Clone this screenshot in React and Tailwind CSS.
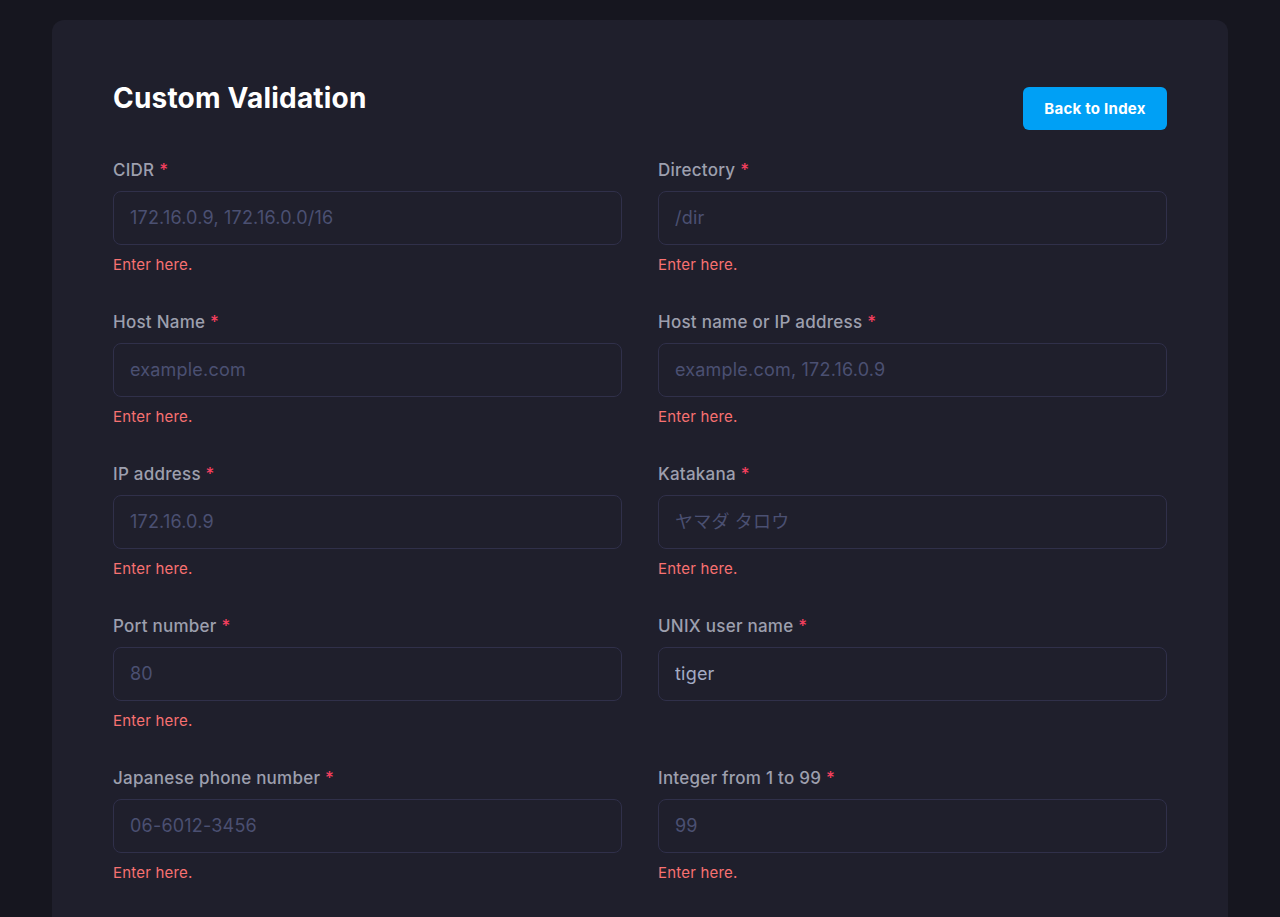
import React from 'react';

const fields = [
  { label: 'CIDR', placeholder: '172.16.0.9, 172.16.0.0/16', error: true },
  { label: 'Directory', placeholder: '/dir', error: true },
  { label: 'Host Name', placeholder: 'example.com', error: true },
  { label: 'Host name or IP address', placeholder: 'example.com, 172.16.0.9', error: true },
  { label: 'IP address', placeholder: '172.16.0.9', error: true },
  { label: 'Katakana', placeholder: 'ヤマダ タロウ', error: true },
  { label: 'Port number', placeholder: '80', error: true },
  { label: 'UNIX user name', placeholder: '', value: 'tiger', error: false },
  { label: 'Japanese phone number', placeholder: '06-6012-3456', error: true },
  { label: 'Integer from 1 to 99', placeholder: '99', error: true },
];

const Field = ({ label, placeholder, value, error }) => (
  <div className="flex flex-col">
    <label className="text-[17px] leading-[26px] font-medium tracking-[0.25px] text-[#9d9fae]">
      {label} <span className="text-[#f43f5e]">*</span>
    </label>
    <input
      className="mt-[8px] h-[54px] w-full rounded-lg border border-[#30304a] bg-[#1f1f2c] px-4 pb-[2px] text-[18px] tracking-[0.2px] text-[#a3abc4] placeholder:text-[#4b5072] outline-none"
      placeholder={placeholder}
      defaultValue={value}
    />
    {error && (
      <p className="mt-[10px] text-[15px] leading-5 tracking-[0.2px] text-[#f87171]">Enter here.</p>
    )}
  </div>
);

export default function App() {
  return (
    <div
      className="min-h-screen bg-[#16161f] px-[52px] pt-5"
      style={{ fontFamily: 'Inter, "Noto Sans CJK JP", sans-serif' }}
    >
      <div className="rounded-xl bg-[#1f1f2c] px-[61px] pt-[80px] pb-16 min-h-[897px]">
        <div className="flex items-start justify-between mb-[27px] h-[50px] -mt-[20px]">
          <h1 className="text-[28px] leading-9 font-bold tracking-[0.2px] text-white">Custom Validation</h1>
          <button className="mt-[7px] h-[43px] w-[144px] rounded-md bg-[#00a0f5] pt-px text-[15px] font-bold tracking-[0.25px] text-white">
            Back to Index
          </button>
        </div>
        <div className="grid grid-cols-2 gap-x-9 gap-y-[34px]">
          {fields.map((f) => (
            <Field key={f.label} {...f} />
          ))}
        </div>
      </div>
    </div>
  );
}
